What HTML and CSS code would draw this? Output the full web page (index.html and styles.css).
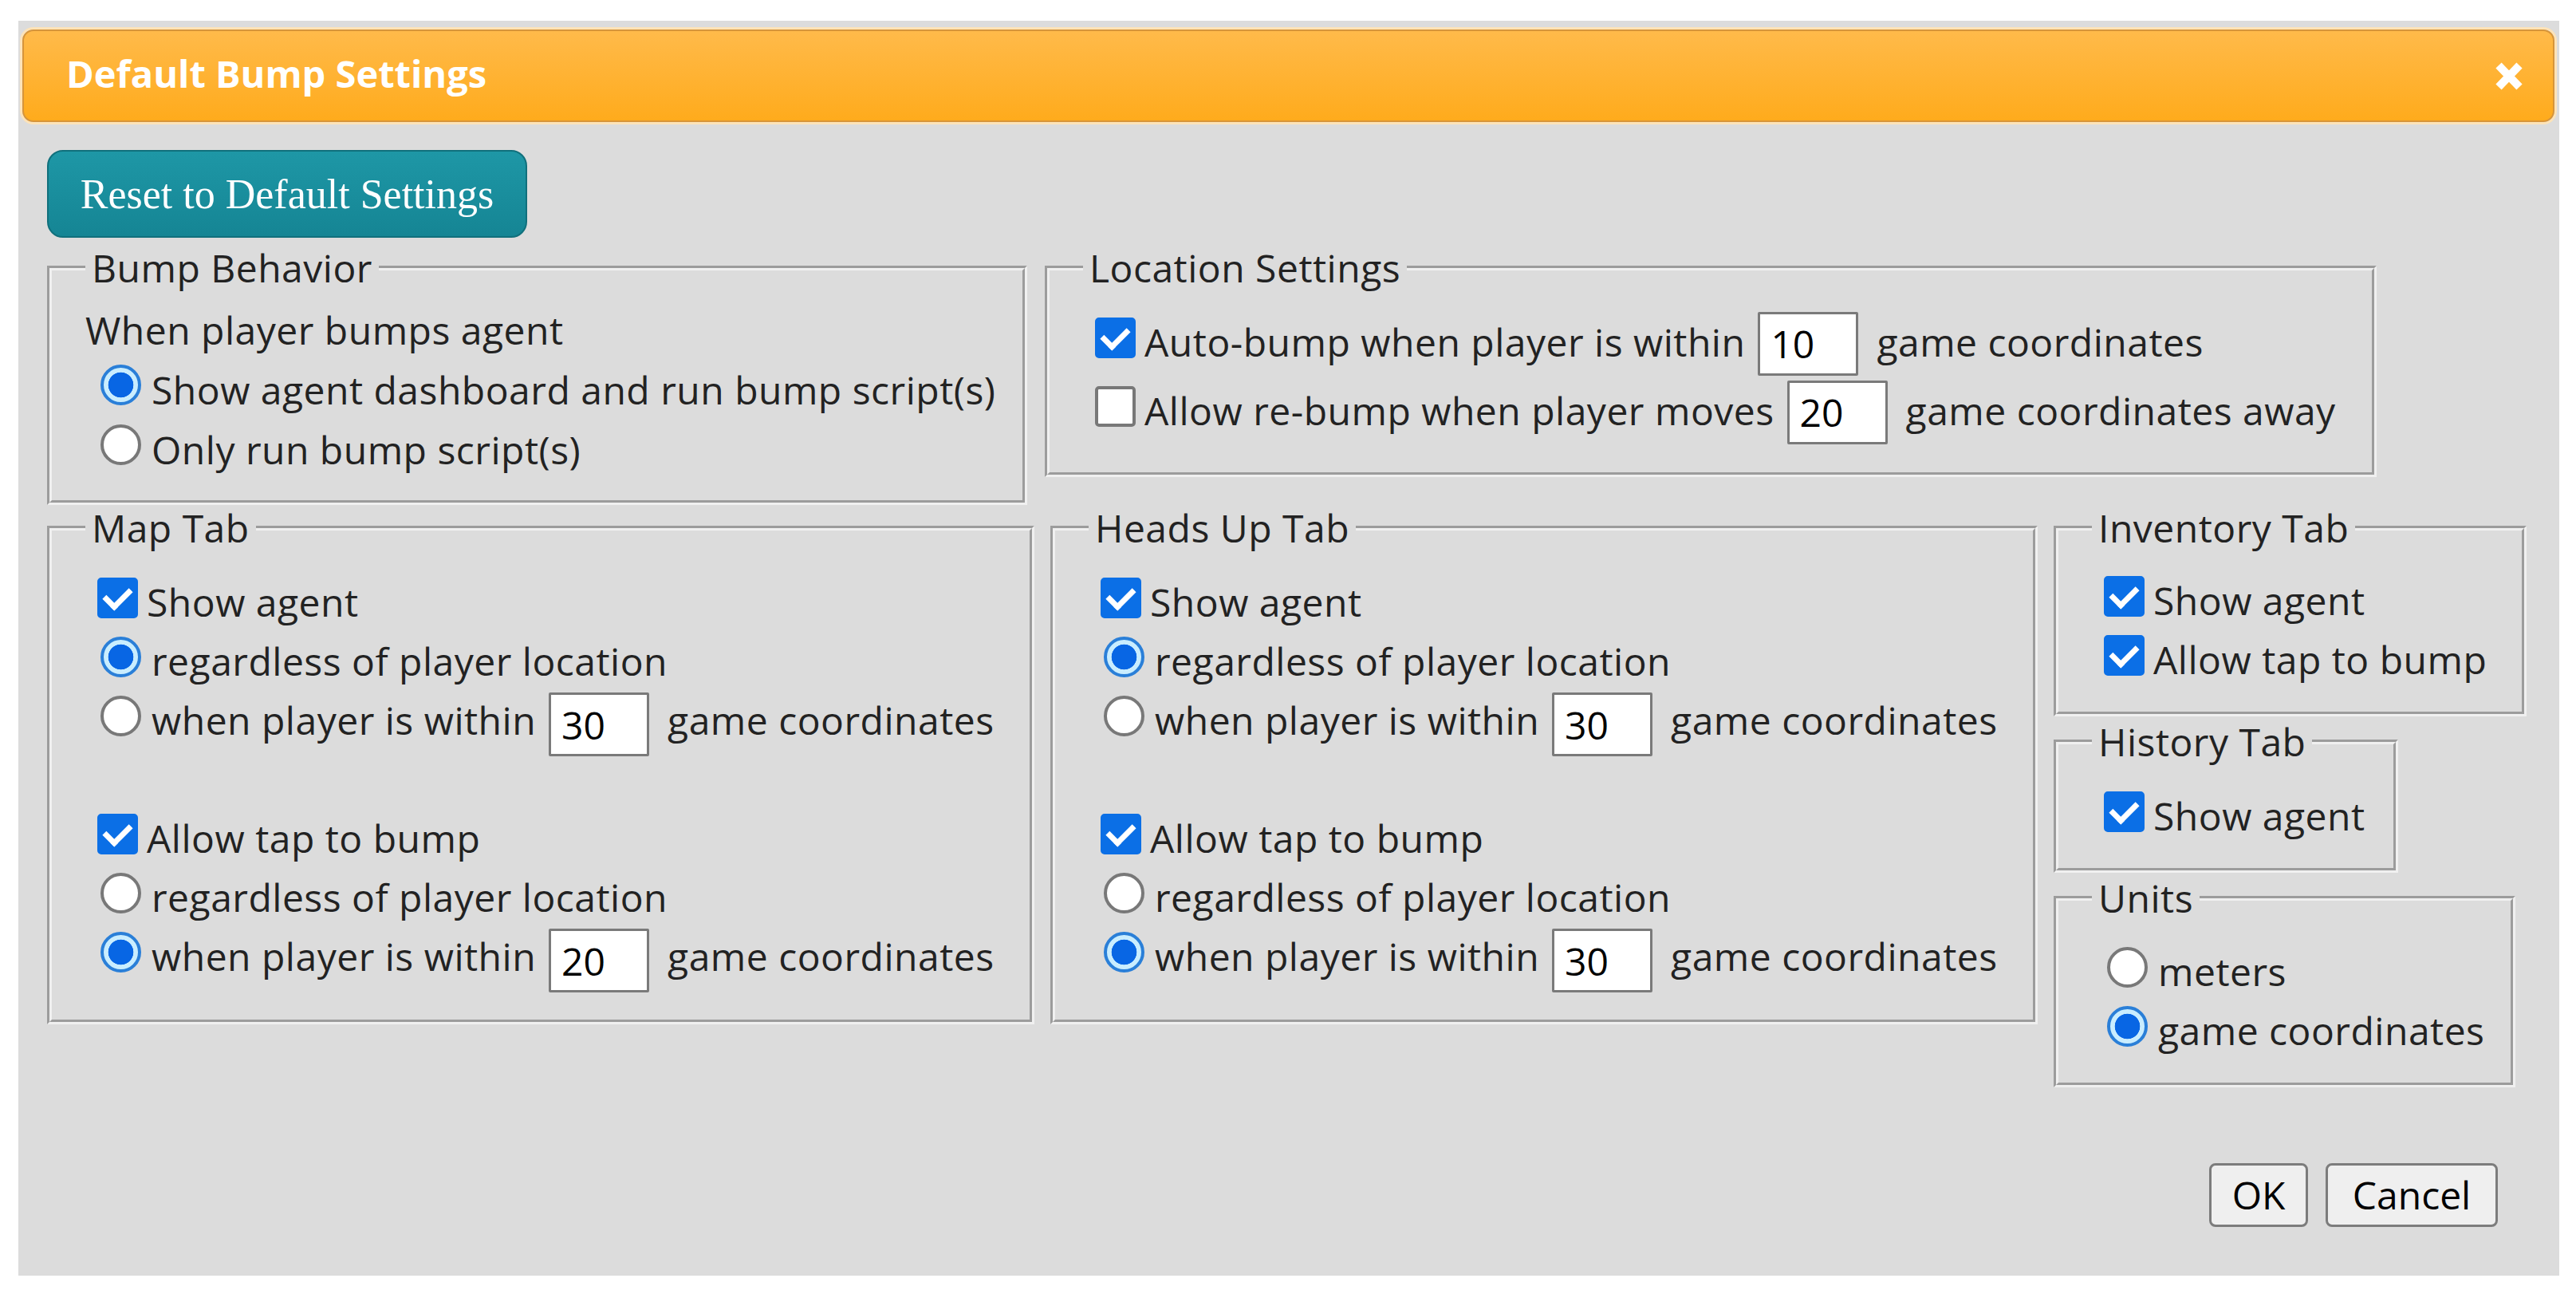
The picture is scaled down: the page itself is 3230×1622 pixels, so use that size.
FILE: index.html
```html
<!DOCTYPE html>
<html lang="en">
<head>
  <meta charset="UTF-8">
  <title>Default Bump Settings</title>
  <link rel="stylesheet" href="styles.css">
</head>
<body>

  <div class="dialog">
    <div class="titlebar">
      <span class="title">Default Bump Settings</span>
      <svg class="close" width="36" height="37" viewBox="0 0 36 37">
        <path d="M5 5 L31 32 M31 5 L5 32" stroke="#fff" stroke-width="10" fill="none"/>
      </svg>
    </div>

    <div class="content">
      <button class="reset">Reset to Default Settings</button>

      <div class="group-row first">
        <fieldset class="box bump">
          <legend>Bump Behavior</legend>
          <div class="line">When player bumps agent</div>
          <div class="line"><input type="radio" name="bump" checked><span>Show agent dashboard and run bump script(s)</span></div>
          <div class="line"><input type="radio" name="bump"><span>Only run bump script(s)</span></div>
        </fieldset>

        <fieldset class="box location">
          <legend>Location Settings</legend>
          <div class="line"><input type="checkbox" checked><span>Auto-bump when player is within</span><input class="num" type="text" value="10"><span>game coordinates</span></div>
          <div class="line"><input type="checkbox"><span>Allow re-bump when player moves</span><input class="num" type="text" value="20"><span>game coordinates away</span></div>
        </fieldset>
      </div>

      <div class="group-row second">
        <fieldset class="box tab">
          <legend>Map Tab</legend>
          <div class="line"><input type="checkbox" checked><span>Show agent</span></div>
          <div class="line"><input type="radio" name="mapShow" checked><span>regardless of player location</span></div>
          <div class="line"><input type="radio" name="mapShow"><span>when player is within</span><input class="num" type="text" value="30"><span>game coordinates</span></div>
          <div class="line"></div>
          <div class="line"><input type="checkbox" checked><span>Allow tap to bump</span></div>
          <div class="line"><input type="radio" name="mapTap"><span>regardless of player location</span></div>
          <div class="line"><input type="radio" name="mapTap" checked><span>when player is within</span><input class="num" type="text" value="20"><span>game coordinates</span></div>
        </fieldset>

        <fieldset class="box tab">
          <legend>Heads Up Tab</legend>
          <div class="line"><input type="checkbox" checked><span>Show agent</span></div>
          <div class="line"><input type="radio" name="hudShow" checked><span>regardless of player location</span></div>
          <div class="line"><input type="radio" name="hudShow"><span>when player is within</span><input class="num" type="text" value="30"><span>game coordinates</span></div>
          <div class="line"></div>
          <div class="line"><input type="checkbox" checked><span>Allow tap to bump</span></div>
          <div class="line"><input type="radio" name="hudTap"><span>regardless of player location</span></div>
          <div class="line"><input type="radio" name="hudTap" checked><span>when player is within</span><input class="num" type="text" value="30"><span>game coordinates</span></div>
        </fieldset>

        <div class="side">
          <fieldset class="box inventory">
            <legend>Inventory Tab</legend>
            <div class="line"><input type="checkbox" checked><span>Show agent</span></div>
            <div class="line"><input type="checkbox" checked><span>Allow tap to bump</span></div>
          </fieldset>

          <fieldset class="box history">
            <legend>History Tab</legend>
            <div class="line"><input type="checkbox" checked><span>Show agent</span></div>
          </fieldset>

          <fieldset class="box units">
            <legend>Units</legend>
            <div class="line"><input type="radio" name="units"><span>meters</span></div>
            <div class="line"><input type="radio" name="units" checked><span>game coordinates</span></div>
          </fieldset>
        </div>
      </div>

      <div class="actions">
        <button class="ok">OK</button>
        <button class="cancel">Cancel</button>
      </div>
    </div>
  </div>

</body>
</html>
```

FILE: styles.css
```css
* {
  box-sizing: border-box;
}

body {
  margin: 0;
  background-color: #fff;
  font-family: 'Open Sans', sans-serif;
  font-size: 48px;
  letter-spacing: 0.5px;
  color: #222;
}

.dialog {
  margin: 26px 0 0 23px;
  width: 3186px;
  height: 1573px;
  padding: 11px 6px 0 5px;
  background-color: #dcdcdc;
  overflow: hidden;
}

.titlebar {
  display: flex;
  align-items: center;
  justify-content: space-between;
  height: 116px;
  padding: 0 37px 6px 53px;
  border: 2px solid #d6953b;
  border-radius: 14px;
  background: linear-gradient(#ffba4a, #ffab1c);
  box-shadow: 0 0 0 3px #fde3b8;
}

.title {
  color: #fff;
  font-weight: bold;
  font-size: 47px;
  letter-spacing: 0;
}

.close {
  margin-top: 6px;
}

.content {
  padding: 35px 71px 0 31px;
}

.reset {
  display: block;
  width: 602px;
  height: 110px;
  padding: 0;
  border: 2px solid #10707c;
  border-radius: 20px;
  background: linear-gradient(#1e97a6, #158594);
  color: #fff;
  font-family: 'Liberation Serif', serif;
  font-size: 52px;
  letter-spacing: 0;
}

.group-row {
  display: flex;
  align-items: flex-start;
}

.group-row.first {
  gap: 22px;
  margin-top: 6px;
}

.group-row.second {
  gap: 20px;
  margin-top: -3px;
}

.side {
  display: flex;
  flex: none;
  flex-direction: column;
  align-items: flex-start;
}

/* fieldsets */
.box {
  flex: none;
  margin: 0;
  min-width: 0;
  padding: 23px 0 28px 42px;
  border: 6px groove #f0f0f0;
}

.box legend {
  padding: 0 8px;
  line-height: 64px;
}

.bump { width: 1229px; padding-top: 8px; padding-bottom: 26px; }
.location { width: 1670px; padding-top: 18px; padding-bottom: 34px; }
.tab { width: 1238px; padding-top: 24px; padding-bottom: 42px; }
.inventory { width: 593px; padding-top: 22px; }
.history { width: 432px; padding-top: 24px; }
.units { width: 579px; }

.line {
  display: flex;
  align-items: center;
  height: 74px;
  line-height: 74px;
  white-space: nowrap;
}

.bump .line {
  height: 75px;
  line-height: 75px;
}

.location .line {
  height: 86px;
  line-height: 86px;
}

/* radios and checkboxes */
input[type="radio"],
input[type="checkbox"] {
  appearance: none;
  flex: none;
  width: 51px;
  height: 51px;
  margin: 0 13px 12px 19px;
  border: 4px solid #787878;
  background-color: #fff;
}

input[type="radio"] {
  border-radius: 50%;
}

input[type="radio"]:checked {
  border-color: #2a7fd8;
  background: radial-gradient(circle closest-side, #0866e4 0 72%, #c9edff 75% 100%);
}

input[type="checkbox"] {
  margin: 0 11px 12px 15px;
  border-radius: 5px;
}

input[type="checkbox"]:checked {
  border-color: #0b6fe6;
  background-color: #0b6fe6;
}

input[type="checkbox"]:checked::after {
  content: "";
  display: block;
  width: 14px;
  height: 26px;
  margin: 2px auto 0;
  border: solid #fff;
  border-width: 0 7px 7px 0;
  transform: rotate(45deg);
}

.num {
  flex: none;
  width: 126px;
  height: 80px;
  margin: 10px 23px 0 16px;
  padding: 0 0 0 13px;
  border: 3px solid #7a7a7a;
  border-radius: 2px;
  background-color: #fff;
  color: #000;
  font: inherit;
}

.location .num {
  margin-top: 4px;
}

/* footer buttons */
.actions {
  display: flex;
  justify-content: flex-end;
  gap: 22px;
  margin-top: 95px;
}

.actions button {
  height: 80px;
  padding: 0;
  border: 3px solid #7c7c7c;
  border-radius: 8px;
  background-color: #efefef;
  color: #000;
  font: inherit;
  line-height: 1;
}

.ok { width: 124px; }
.cancel { width: 216px; }
```
